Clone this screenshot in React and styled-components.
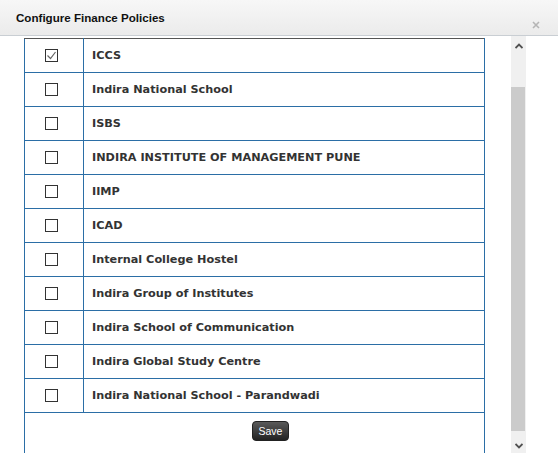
import React from 'react'
import styled, { createGlobalStyle } from 'styled-components'

const schools = [
    { name: 'ICCS', checked: true },
    { name: 'Indira National School' },
    { name: 'ISBS' },
    { name: 'INDIRA INSTITUTE OF MANAGEMENT PUNE' },
    { name: 'IIMP' },
    { name: 'ICAD' },
    { name: 'Internal College Hostel' },
    { name: 'Indira Group of Institutes' },
    { name: 'Indira School of Communication' },
    { name: 'Indira Global Study Centre' },
    { name: 'Indira National School - Parandwadi' },
]

const GlobalStyle = createGlobalStyle`
    body {
        margin: 0;
        background: #fff;
        font-family: "DejaVu Sans", Verdana, sans-serif;
    }
`

const Check = ({ checked }) => (
    <Box>
        {checked && (
            <svg width="11" height="11" viewBox="0 0 11 11">
                <polyline points="1.5,5.5 4.5,8.5 9.5,2" fill="none" stroke="#666" strokeWidth="1.2" />
            </svg>
        )}
    </Box>
)

const Chevron = ({ down }) => (
    <svg width="8" height="6" viewBox="0 0 8 6">
        <polyline
            points={down ? '0.5,1 4,4.5 7.5,1' : '0.5,5 4,1.5 7.5,5'}
            fill="none"
            stroke="#505050"
            strokeWidth="1.8"
        />
    </svg>
)

const App = () => {
    return (
        <>
            <GlobalStyle />
            <Modal>
                <Header>
                    <Title>Configure Finance Policies</Title>
                    <Close aria-label="close">
                        <svg width="8" height="8" viewBox="0 0 8 8">
                            <path d="M1 1 L7 7 M7 1 L1 7" stroke="#b5b5b5" strokeWidth="1.6" />
                        </svg>
                    </Close>
                </Header>
                <Body>
                    <TableWrap>
                        <Table>
                            <tbody>
                                {schools.map((s) => (
                                    <tr key={s.name}>
                                        <CheckCell>
                                            <Check checked={s.checked} />
                                        </CheckCell>
                                        <NameCell>{s.name}</NameCell>
                                    </tr>
                                ))}
                                <tr>
                                    <SaveCell colSpan={2}>
                                        <SaveButton>Save</SaveButton>
                                    </SaveCell>
                                </tr>
                            </tbody>
                        </Table>
                    </TableWrap>
                    <Scrollbar>
                        <ArrowButton>
                            <Chevron />
                        </ArrowButton>
                        <Thumb />
                        <ArrowButton $bottom>
                            <Chevron down />
                        </ArrowButton>
                    </Scrollbar>
                </Body>
            </Modal>
        </>
    )
}

const Modal = styled.div`
    width: 558px;
    height: 453px;
    overflow: hidden;
    background: #fff;
    display: flex;
    flex-direction: column;
`

const Header = styled.div`
    height: 35px;
    flex-shrink: 0;
    display: flex;
    align-items: center;
    justify-content: space-between;
    padding-left: 16px;
    background: linear-gradient(to bottom, #f7f7f7, #ebebeb);
    border-bottom: 1px solid #c9ced3;
`

const Title = styled.span`
    font-family: "Liberation Sans", Arial, sans-serif;
    font-size: 11.6px;
    font-weight: bold;
    color: #111;
`

const Close = styled.span`
    align-self: flex-end;
    display: flex;
    margin: 0 18px 6px 0;
`

const Body = styled.div`
    flex: 1;
    display: flex;
    overflow: hidden;
`

const TableWrap = styled.div`
    padding: 2px 0 0 24px;
    width: 461px;
`

const Table = styled.table`
    width: 461px;
    border-collapse: collapse;
    border-top: 1px solid #555;
    border-left: 1px solid #2b6ea6;
    border-right: 1px solid #2b6ea6;

    tr td {
        border-bottom: 1px solid #2b6ea6;
    }
`

const CheckCell = styled.td`
    width: 38px;
    height: 33px;
    padding: 0 0 0 20px;
    border-right: 1px solid #2b6ea6;
    text-align: left;
    vertical-align: middle;
`

const Box = styled.span`
    display: flex;
    align-items: center;
    justify-content: center;
    width: 11px;
    height: 11px;
    border: 1px solid #333;
    background: #fff;
`

const NameCell = styled.td`
    padding: 0 0 0 8px;
    font-size: 11.26px;
    font-weight: bold;
    color: #333;
    vertical-align: middle;
`

const SaveCell = styled.td`
    height: 60px;
    padding: 7px 0 0 32px;
    text-align: center;
    vertical-align: top;
`

const SaveButton = styled.button`
    width: 37px;
    height: 20px;
    padding: 0;
    border: 1px solid #222;
    border-radius: 4px;
    background: linear-gradient(to bottom, #5a5a5a, #222);
    color: #fff;
    font-family: "Liberation Sans", Arial, sans-serif;
    font-size: 10.5px;
    line-height: 18px;
`

const Scrollbar = styled.div`
    width: 15px;
    margin-left: 26px;
    background: #f0f0f0;
    display: flex;
    flex-direction: column;
`

const ArrowButton = styled.div`
    height: 15px;
    display: flex;
    align-items: center;
    justify-content: center;
    padding-top: ${(p) => (p.$bottom ? '1px' : '2px')};
    margin-top: ${(p) => (p.$bottom ? 'auto' : '0')};
`

const Thumb = styled.div`
    margin-top: 34px;
    height: 344px;
    width: 14px;
    background: #cbcbcb;
`

export default App
